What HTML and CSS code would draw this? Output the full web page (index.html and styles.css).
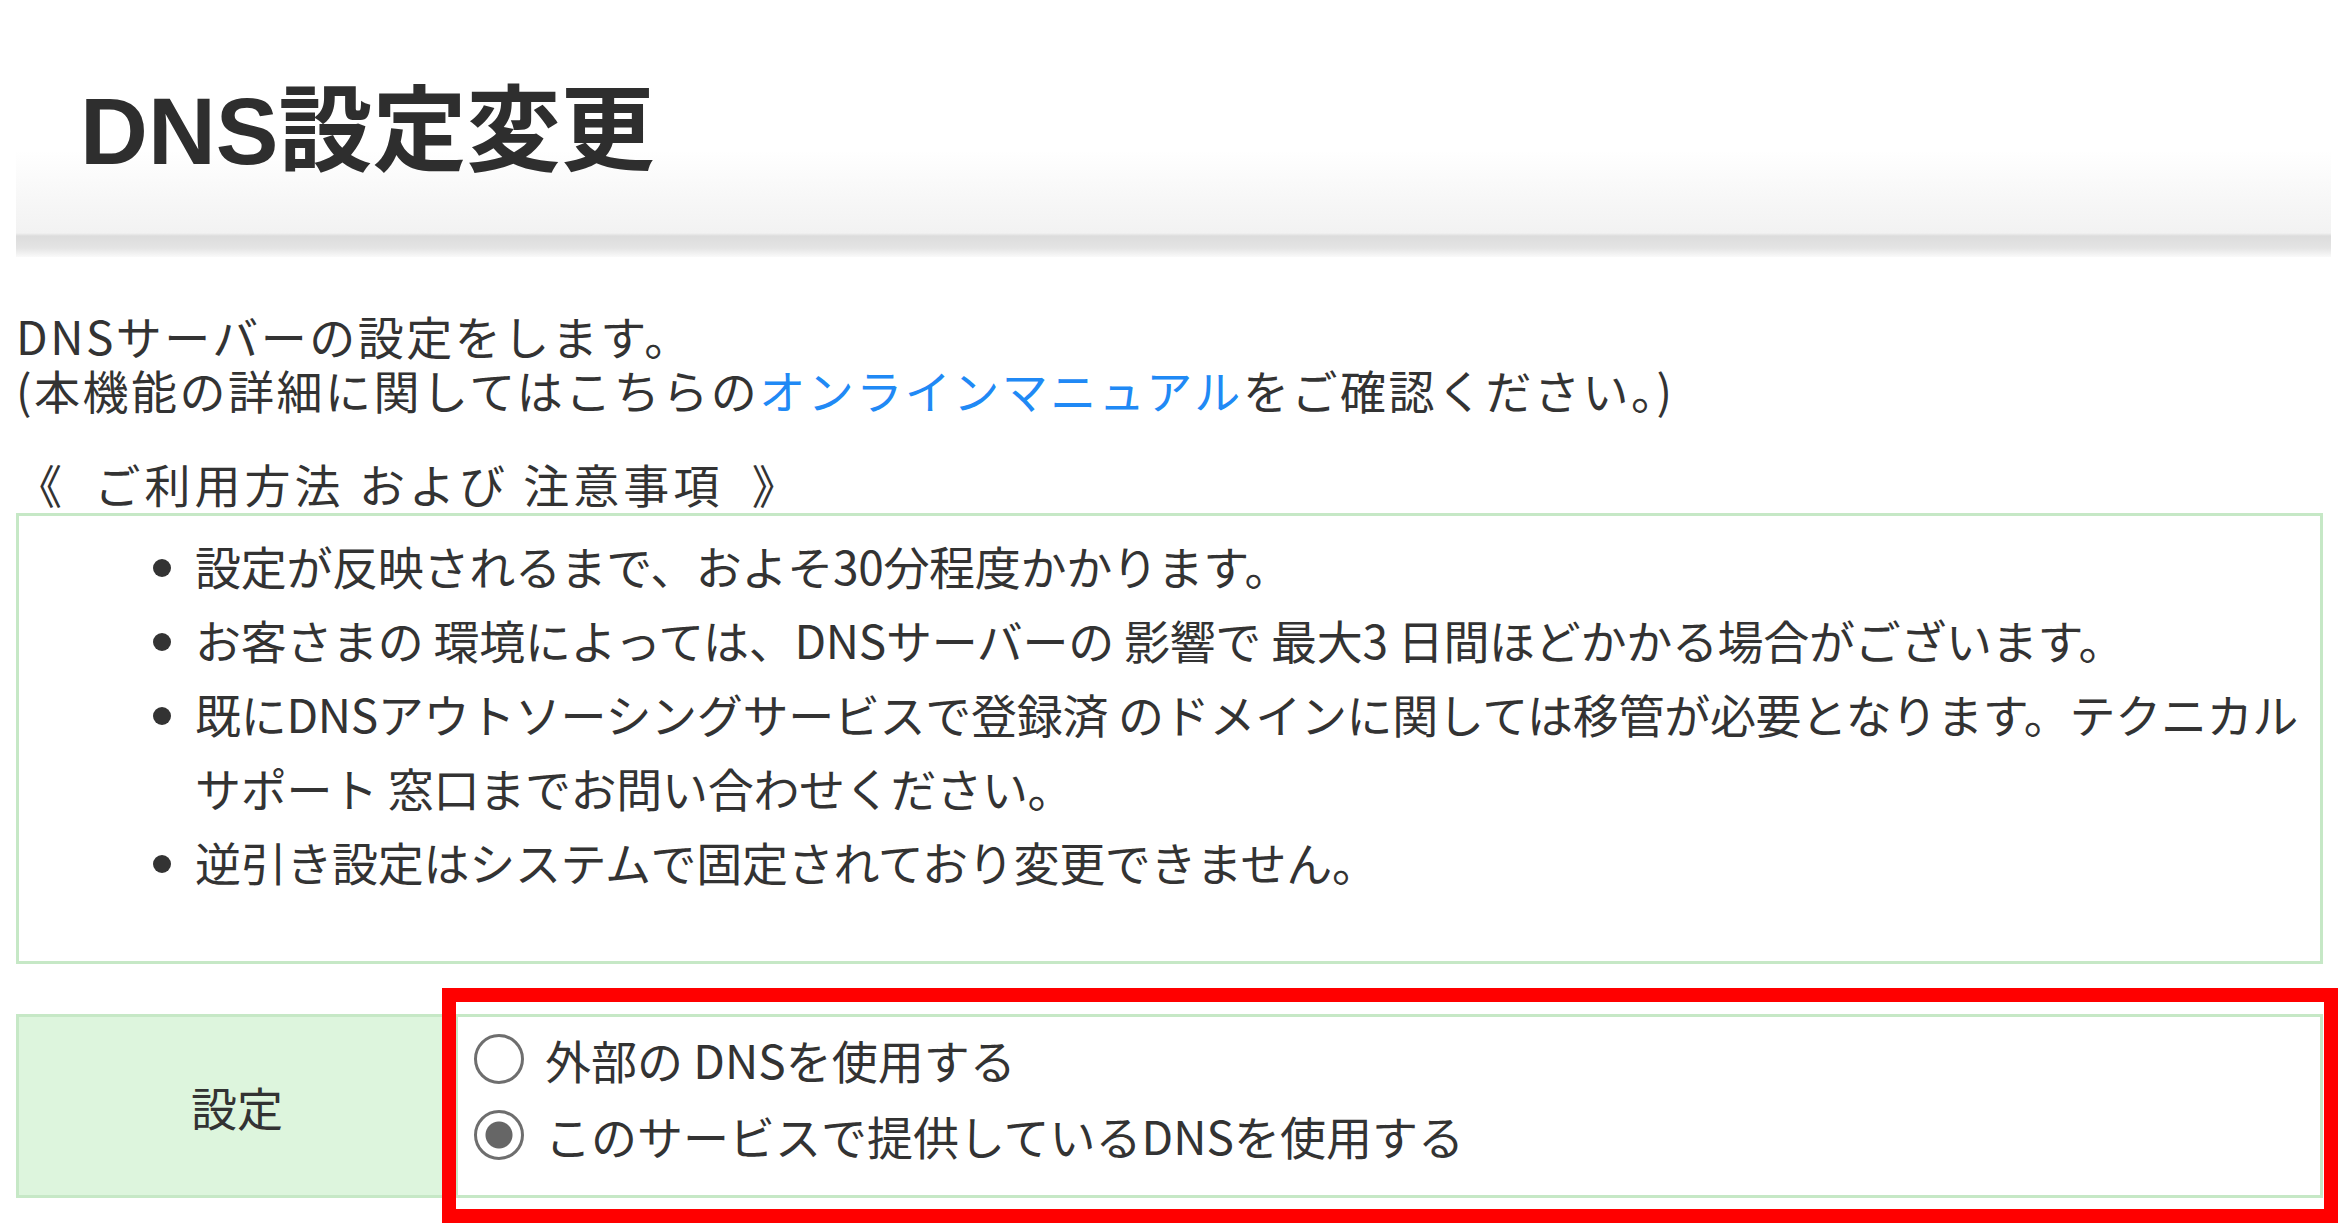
FILE: index.html
```html
<!DOCTYPE html>
<html lang="ja">

<head>
    <meta charset="UTF-8">
    <meta name="viewport" content="width=device-width, initial-scale=1.0">
    <title>DNS設定変更</title>
    <link rel="stylesheet" href="styles.css">
</head>

<body>

    <div class="page">
        <div class="page-header">
            <h1>DNS設定変更</h1>
        </div>

        <p class="lead">
            DNSサーバーの設定をします。<br>
            (本機能の詳細に関してはこちらの<a href="#">オンラインマニュアル</a>をご確認ください。)
        </p>

        <h2 class="notes-title">《&nbsp; ご利用方法 および 注意事項&nbsp; 》</h2>
        <div class="notes">
            <ul>
                <li>設定が反映されるまで、およそ30分程度かかります。</li>
                <li>お客さまの 環境によっては、DNSサーバーの 影響で 最大3 日間ほどかかる場合がございます。</li>
                <li>既にDNSアウトソーシングサービスで登録済 のドメインに関しては移管が必要となります。テクニカル<br>サポート 窓口までお問い合わせください。</li>
                <li>逆引き設定はシステムで固定されており変更できません。</li>
            </ul>
        </div>

        <div class="setting-wrap">
            <table class="setting">
                <tr>
                    <th>設定</th>
                    <td>
                        <label class="radio-row">
                            <input type="radio" name="dns" value="external">
                            <span>外部の DNSを使用する</span>
                        </label>
                        <label class="radio-row">
                            <input type="radio" name="dns" value="service" checked>
                            <span>このサービスで提供しているDNSを使用する</span>
                        </label>
                    </td>
                </tr>
            </table>
            <!-- 注目箇所の赤枠 -->
            <div class="highlight"></div>
        </div>
    </div>

</body>

</html>
```

FILE: styles.css
```css
body {
    margin: 0;
    padding: 0;
    background-color: #fff;
    color: #333;
    font-family: "Noto Sans CJK JP", sans-serif;
    font-size: 46px;
    overflow: hidden;
}

.page {
    width: 2307px;
    margin-left: 16px;
    height: 1225px;
}

.page-header {
    width: 2315px;
    height: 257px;
    background: linear-gradient(to bottom,
            #fff 0,
            #fff 150px,
            #f7f7f7 200px,
            #f2f2f2 233px,
            #dcdcdc 236px,
            #e4e4e4 248px,
            #fafafa 257px);
}

.page-header h1 {
    margin: 0;
    padding: 82px 0 0 64px;
    line-height: 100px;
    font-family: "Liberation Sans", "Noto Sans CJK JP", sans-serif;
    font-size: 94px;
    font-weight: bold;
    color: #2e2e2e;
}

.lead {
    margin: 51px 0 0;
    line-height: 54px;
    letter-spacing: 2.5px;
}

.lead a {
    color: #2089f5;
    text-decoration: none;
}

.notes-title {
    margin: 41px 0 4px;
    font-size: 46px;
    font-weight: normal;
    line-height: 52px;
    letter-spacing: 4px;
}

.notes {
    height: 445px;
    border: 3px solid #c6e8c6;
}

.notes ul {
    margin: 12px 0 0;
    padding-left: 176px;
}

.notes li {
    line-height: 74px;
    letter-spacing: -0.3px;
}

.setting-wrap {
    position: relative;
    margin-top: 50px;
}

.setting {
    width: 100%;
    border-collapse: collapse;
}

.setting th,
.setting td {
    border: 3px solid #c6e8c6;
}

.setting th {
    width: 434px;
    height: 176px;
    background-color: #ddf5dd;
    font-weight: normal;
    text-align: center;
}

.setting td {
    padding: 0 0 18px 16px;
    vertical-align: middle;
}

.radio-row {
    display: flex;
    align-items: center;
    height: 76px;
}

.radio-row input {
    appearance: none;
    -webkit-appearance: none;
    width: 50px;
    height: 50px;
    margin: 0 21px 0 0;
    border: 3px solid #6e6e6e;
    border-radius: 50%;
    background-color: #fff;
    box-sizing: border-box;
}

.radio-row input:checked {
    background: radial-gradient(circle, #666 0, #666 13px, #fff 14px);
}

.highlight {
    position: absolute;
    left: 426px;
    top: -26px;
    width: 1868px;
    height: 207px;
    border: 14px solid #ff0000;
    pointer-events: none;
}
```
